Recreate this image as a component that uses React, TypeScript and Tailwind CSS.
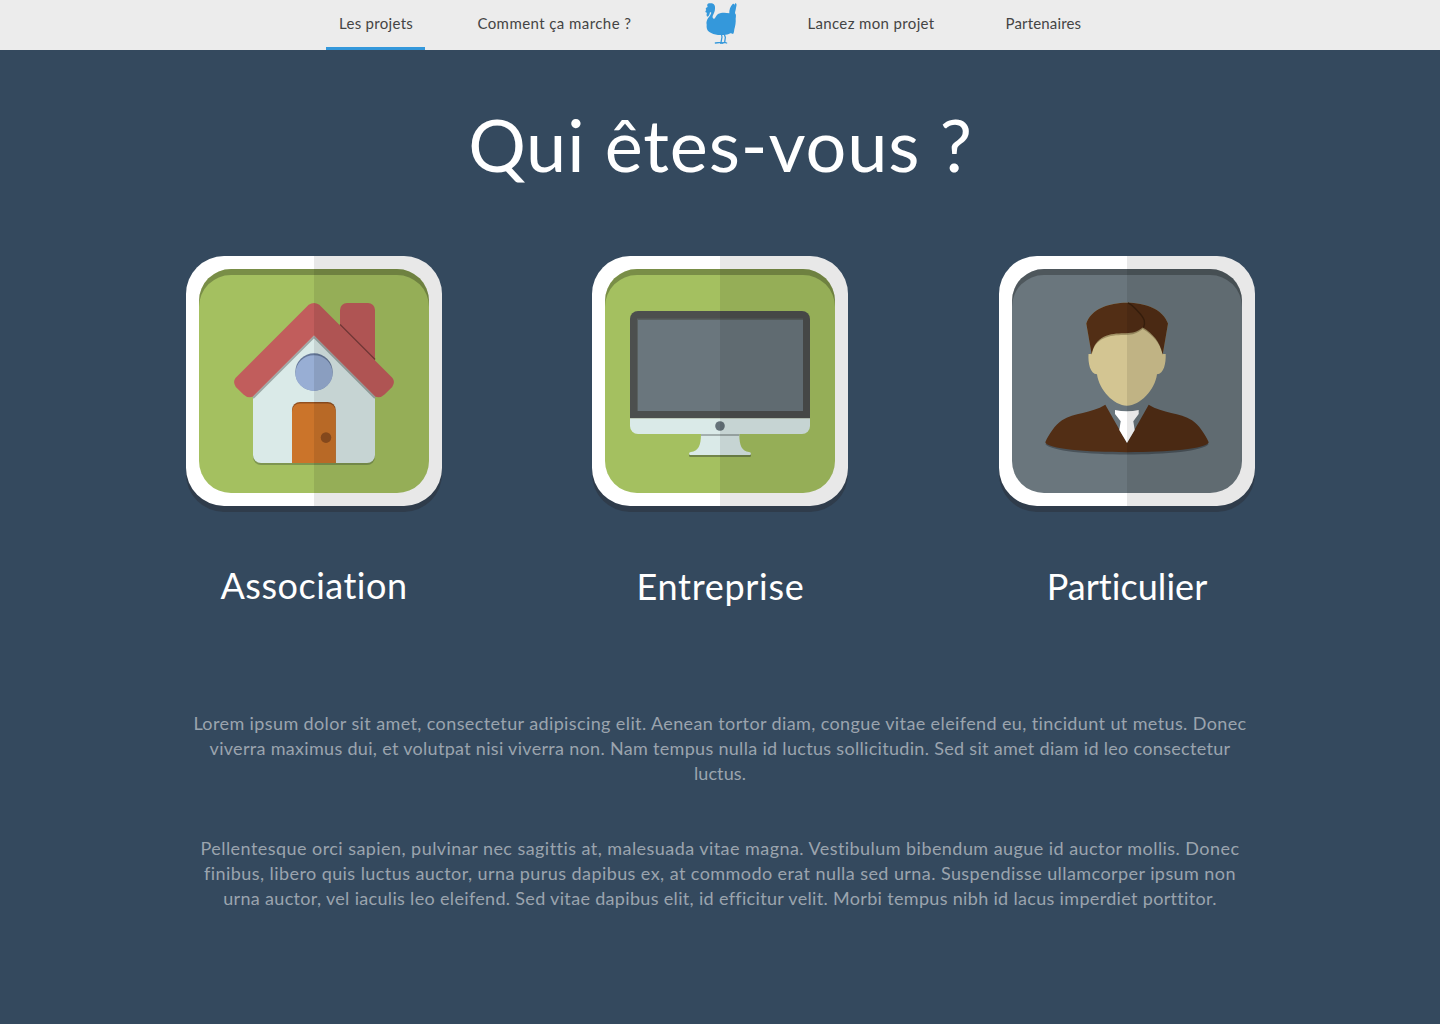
import type { ReactNode } from 'react';

function Turkey() {
  return (
    <svg viewBox="0 0 180 150" className="h-[50px] w-[60px]" aria-label="Accueil">
      <path d="M53 21C49 13 54 8 61 10C69 8 77 15 75 26C75 34 71 41 68 48C67 53 69 57 73 56C77 53 78 46 84 42C93 37 107 37 118 40C117 31 121 18 128 12C132 9 134 13 131 21L128 34C130 24 132 13 136 10C141 10 140 17 138 24C137 31 135 36 135 40C139 43 138 50 137 56C138 66 136 78 133 88C132 94 132 100 129 102C126 101 124 99 121 100C115 104 109 105 102 105H84C74 104 65 101 58 96C51 91 49 83 50 74C48 67 51 60 54 55C58 50 62 44 64 38L60 36C59 42 57 49 53 50C49 49 49 43 51 38C46 38 44 34 49 30C45 26 49 22 53 21Z" fill="#3498db" />
      <path d="M94 101L96 111L93 127L76 129M102 101L106 112L104 127L92 130M93 127L99 130M104 127L110 129" fill="none" stroke="#3498db" strokeWidth="3.800" strokeLinecap="round" strokeLinejoin="round" />
    </svg>
  );
}

function Tile({ id, fill, children }: { id: string; fill: string; children: ReactNode }) {
  return (
    <svg viewBox="0 0 256 256" className="block size-64">
      <defs>
        <clipPath id={id}>
          <rect x="13" y="13" width="230" height="224" rx="32" />
        </clipPath>
      </defs>
      <rect y="6" width="256" height="250" rx="38" fill="#2f3c4b" />
      <rect width="256" height="250" rx="38" fill="#fff" />
      <g clipPath={`url(#${id})`}>
        <rect x="13" y="12" width="230" height="226" fill={fill} />
        <path d="M13 12H243V51A32 32 0 0 0 211 19H45A32 32 0 0 0 13 51Z" fill="#000" opacity=".26" />
      </g>
      {children}
      <path d="M128 0H218A38 38 0 0 1 256 38V212A38 38 0 0 1 218 250H128Z" fill="#000" opacity=".09" />
    </svg>
  );
}

function House() {
  return (
    <Tile id="tile-house" fill="#a4c060">
      <path d="M67 150H189V201a8 8 0 0 1-8 8H75a8 8 0 0 1-8-8Z" fill="#7e9550" />
      <path d="M128 75L189 138V199a8 8 0 0 1-8 8H75a8 8 0 0 1-8-8V138Z" fill="#daeae8" />
      <path d="M154 75V54a7 7 0 0 1 7-7H182a7 7 0 0 1 7 7V106Z" fill="#c15d5c" />
      <path d="M154 68.500L189 103.500" stroke="#7c3c3b" strokeWidth="1.600" />
      <path d="M67 142L128 81L189 142" fill="none" stroke="#9da9a7" strokeWidth="2" />
      <path d="M122.700 48.800Q128 45 133.300 48.800L206.500 122Q209.500 126 206.200 131L198.500 138.500Q194 142.800 189 140.600L128 79.600L67 140.600Q62 142.800 57.500 138.500L49.800 131Q46.500 126 49.500 122Z" fill="#c15d5c" />
      <circle cx="128" cy="116" r="18.700" fill="#66799a" />
      <path d="M109.400 117.500a18.600 18.300 0 0 1 37.200 0a18.600 17.400 0 0 1-37.200 0Z" fill="#98aed4" />
      <path d="M106 207V154a8 8 0 0 1 8-8H141.700a8 8 0 0 1 8 8V207Z" fill="#925020" />
      <path d="M106 207V155.500a8 8 0 0 1 8-8H141.700a8 8 0 0 1 8 8V207Z" fill="#cb742a" />
      <circle cx="140" cy="181.600" r="5.300" fill="#92501f" />
    </Tile>
  );
}

function Computer() {
  return (
    <Tile id="tile-computer" fill="#a4c060">
      <path d="M38 162V63a8 8 0 0 1 8-8H210a8 8 0 0 1 8 8V162Z" fill="#4c4f4e" />
      <rect x="45" y="62.500" width="166" height="92.500" fill="#58605f" />
      <rect x="46" y="64" width="165" height="91" fill="#6a767d" />
      <path d="M38 162H218V170a8 8 0 0 1-8 8H46a8 8 0 0 1-8-8Z" fill="#daeae8" />
      <path d="M38 162.500H218" stroke="#bfcbbd" strokeWidth="1" />
      <circle cx="128" cy="170" r="4.800" fill="#66737a" />
      <path d="M97 198H159V199.500a1.500 1.500 0 0 1-1.500 1.500H98.500a1.500 1.500 0 0 1-1.500-1.500Z" fill="#71854a" />
      <path d="M109 178H147.300C147.300 190 150 195 157 196Q159 196.200 159 198Q159 199 157.500 199H98.500Q97 199 97 198Q97 196.200 99 196C106 195 109 190 109 178Z" fill="#daeae8" />
      <path d="M109 178H147.300V180H109Z" fill="#a3afae" />
    </Tile>
  );
}

function Person() {
  return (
    <Tile id="tile-person" fill="#6a767d">
      <path d="M46.300 188C56 202 200 202 209.700 188L190 180H66Z" fill="#4a535a" />
      <path d="M46.300 186.300C50 178 56 169 63 164.300C75 156.500 92 157.500 106.300 148.700L128 187L149.700 148.700C164 157.500 181 156.500 193 164.300C200 169 206 178 209.700 186.300C207 199.500 49 199.500 46.300 186.300Z" fill="#522e15" />
      <path d="M116 154Q128 156.500 139.700 154V158L134.300 165.300L135.700 174L128 187L120.300 174L121.700 165.300L116 158Z" fill="#fff" />
      <path d="M92 98L89.500 98C89 107 91 118 98 118.300C100 134 115 149.700 128 149.700S156 134 158 118.300C165 118 167 107 166.700 98H164L158 80L140 66L100 74Z" fill="#d3c592" />
      <path d="M92.700 98.500L87.300 67.500C92 53 110 46.700 128 46.700S164 53 169 67.500L163.700 98.500C161 87 154 79 143.700 73C138 77.500 134 78.800 127 79C113 78.700 96 80.500 92.700 98.500Z" fill="#a19265" />
      <path d="M92.700 98.500L87.300 67.500C92 53 110 46.700 128 46.700S164 53 169 67.500L163.700 98.500C161 86 154 77.500 143.700 71.500C138 76 134 77 127 77.200C113 77 96 78.500 92.700 98.500Z" fill="#522e15" />
      <path d="M129 47Q133 48.500 140 56.500C146 63 146.500 66 144.500 71.500" fill="none" stroke="#3a200e" strokeWidth="1.400" />
    </Tile>
  );
}

export default function App() {
  return (
    <div className="min-h-screen bg-[#34495e] font-['Lato',sans-serif]">
      <header className="flex h-[50px] items-stretch whitespace-nowrap bg-[#ececec] pl-[326.4px] text-[15px] leading-[46px] text-[#444]">
        <a className="w-[99px] border-b-3 border-[#3498db] pl-[12.6px] tracking-[0.3px]">Les projets</a>
        <a className="ml-[39.6px] w-[179px] pl-[12.4px] tracking-[0.43px]">Comment ça marche ?</a>
        <a className="ml-[46px]">
          <Turkey />
        </a>
        <a className="ml-[45px] w-[152px] pl-[12.4px] tracking-[0.36px]">Lancez mon projet</a>
        <a className="ml-[46px] w-[100px] pl-[12.6px] tracking-[0.16px]">Partenaires</a>
      </header>

      <main className="pt-[58px] text-center">
        <h1 className="pl-px text-[72px] leading-[72px] tracking-[0.9px] text-white">Qui êtes-vous ?</h1>

        <section className="mt-[76px] flex gap-[150px] pl-[186px] text-4xl leading-9 text-white">
          <div className="w-64">
            <House />
            <h2 className="mt-[55px] tracking-[0.5px]">Association</h2>
          </div>
          <div className="w-64">
            <Computer />
            <h2 className="mt-[56px] pl-px tracking-[0.7px]">Entreprise</h2>
          </div>
          <div className="ml-px w-64">
            <Person />
            <h2 className="mt-[56px] tracking-[0.05px]">Particulier</h2>
          </div>
        </section>

        <section className="mt-[107px] whitespace-nowrap text-lg leading-[25px] text-[#9ba4ae]">
          <p>
            <span className="block tracking-[0.387px]">Lorem ipsum dolor sit amet, consectetur adipiscing elit. Aenean tortor diam, congue vitae eleifend eu, tincidunt ut metus. Donec</span>
            <span className="block tracking-[0.31px]">viverra maximus dui, et volutpat nisi viverra non. Nam tempus nulla id luctus sollicitudin. Sed sit amet diam id leo consectetur</span>
            <span className="block tracking-[0.1px]">luctus.</span>
          </p>
          <p className="mt-[50px]">
            <span className="block tracking-[0.447px]">Pellentesque orci sapien, pulvinar nec sagittis at, malesuada vitae magna. Vestibulum bibendum augue id auctor mollis. Donec</span>
            <span className="block tracking-[0.427px]">finibus, libero quis luctus auctor, urna purus dapibus ex, at commodo erat nulla sed urna. Suspendisse ullamcorper ipsum non</span>
            <span className="block tracking-[0.327px]">urna auctor, vel iaculis leo eleifend. Sed vitae dapibus elit, id efficitur velit. Morbi tempus nibh id lacus imperdiet porttitor.</span>
          </p>
        </section>
      </main>
    </div>
  );
}
